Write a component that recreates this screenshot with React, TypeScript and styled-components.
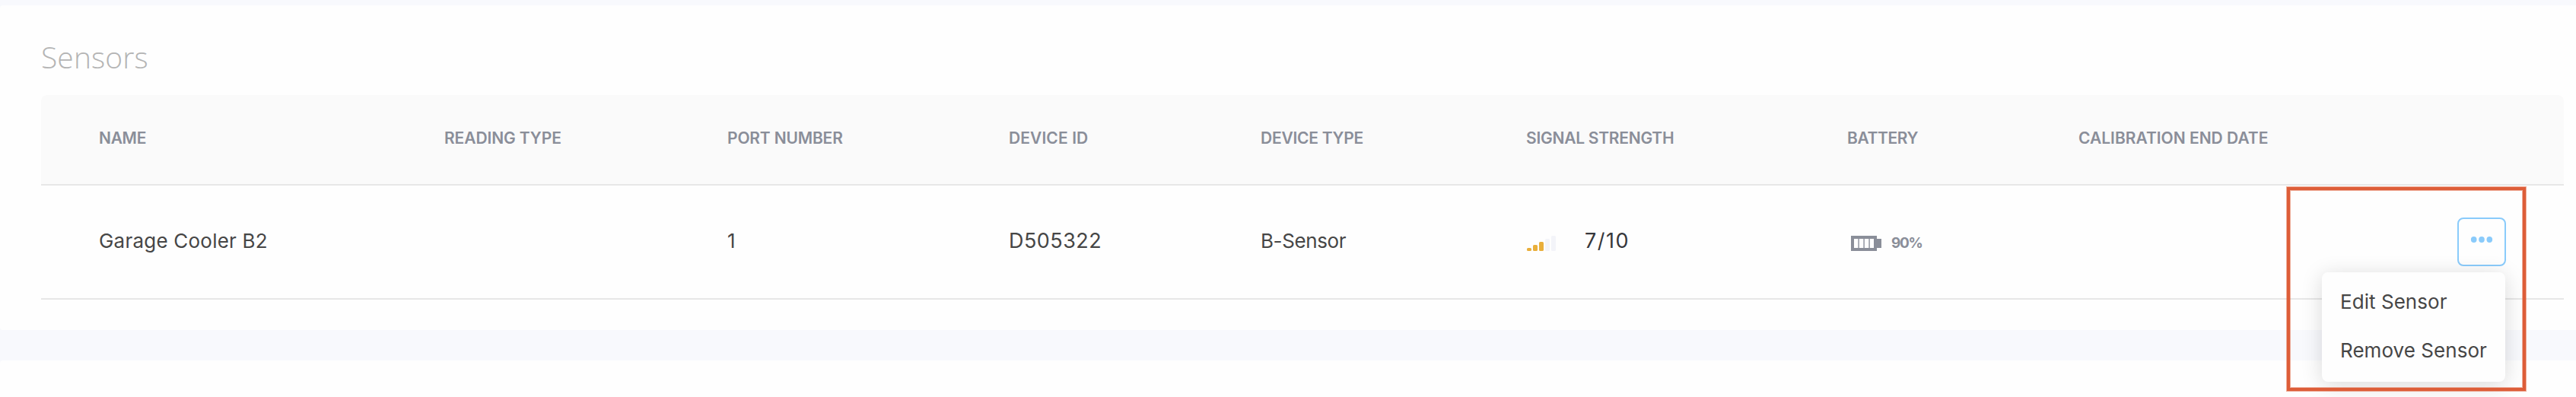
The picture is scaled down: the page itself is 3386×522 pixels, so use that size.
import React from 'react';
import styled, { createGlobalStyle } from 'styled-components';

const GlobalStyle = createGlobalStyle`
  *, *::before, *::after { box-sizing: border-box; }
  body {
    margin: 0;
    background: #f8f9fd;
    font-family: Inter, 'Liberation Sans', sans-serif;
    color: #464646;
  }
`;

const Page = styled.div`
  height: 522px;
  padding-top: 7px;
  display: flex;
  flex-direction: column;
  gap: 40px;
  overflow: hidden;
`;

const Card = styled.section`
  flex: 0 0 427px;
  padding: 44px 16px 0 54px;
  background: #fefefe;
  border-radius: 4px 0 0 4px;
`;

const NextCard = styled.section`
  flex: 1;
  background: #fefefe;
  border-radius: 4px 0 0 0;
`;

const Title = styled.h2`
  margin: 0;
  height: 74px;
  font-family: 'Open Sans', Lato, sans-serif;
  font-size: 39px;
  line-height: 48px;
  font-weight: 300;
  letter-spacing: 0.1px;
  color: #b4b4b4;
`;

const Row = styled.div`
  display: grid;
  grid-template-columns: 454px 372px 370px 331px 349px 422px 304px 1fr 140px;
  align-items: center;
  padding-left: 76px;
  border-bottom: 2px solid #e7e7e7;
`;

const HeaderRow = styled(Row)`
  height: 119px;
  padding-bottom: 3px;
  background: #fafafa;
  border-radius: 8px 8px 0 0;
`;

const SensorRow = styled(Row)`
  height: 150px;
`;

const HeaderCell = styled.div<{ $tracking: number }>`
  font-size: 21px;
  line-height: 26px;
  font-weight: 600;
  letter-spacing: ${(p) => p.$tracking}px;
  color: #8a8e99;
  white-space: nowrap;
`;

const Cell = styled.div<{ $tracking?: number; $size?: number }>`
  display: flex;
  align-items: center;
  height: 34px;
  padding-bottom: 2px;
  font-size: ${(p) => p.$size ?? 26}px;
  line-height: 32px;
  letter-spacing: ${(p) => p.$tracking ?? 0}px;
  white-space: nowrap;
`;

const SignalIcon = styled.svg`
  width: 38px;
  height: 20px;
  margin: 6px 38px 0 1px;
`;

const SignalValue = styled.span`
  color: #36373b;
`;

const BatteryIcon = styled.svg`
  width: 40px;
  height: 20px;
  margin: 6px 13px 0 5px;
`;

const BatteryValue = styled.span`
  margin-top: 6px;
  font-size: 19px;
  line-height: 24px;
  font-weight: 700;
  letter-spacing: -1.3px;
  color: #8a8e99;
`;

const Actions = styled.div`
  position: relative;
  width: 64px;
  height: 64px;
`;

const MoreButton = styled.button`
  display: flex;
  align-items: center;
  justify-content: center;
  width: 64px;
  height: 64px;
  padding: 0 0 6px;
  background: #fefefe;
  border: 2px solid #8acbfb;
  border-radius: 8px;
`;

const Menu = styled.div`
  position: absolute;
  z-index: 1;
  top: 72px;
  right: 1px;
  width: 241px;
  height: 144px;
  padding: 7px 0 0 24px;
  background: #fefefe;
  border-radius: 8px;
  box-shadow: 0 4px 28px rgba(0, 0, 0, 0.15);
`;

const MenuItem = styled.div`
  height: 64px;
  font-size: 26px;
  line-height: 64px;
  letter-spacing: 0.05px;
  white-space: nowrap;
`;

const Highlight = styled.div`
  position: absolute;
  z-index: 2;
  top: -40px;
  left: -224px;
  width: 314px;
  height: 268px;
  border: 4px solid #dd5d38;
  box-shadow: 0 0 0 1px rgba(221, 93, 56, 0.5), inset 0 0 0 1px rgba(221, 93, 56, 0.5);
  pointer-events: none;
`;

const columns = [
  { label: 'NAME', tracking: -0.3 },
  { label: 'READING TYPE', tracking: -0.1 },
  { label: 'PORT NUMBER', tracking: -0.17 },
  { label: 'DEVICE ID', tracking: 0.1 },
  { label: 'DEVICE TYPE', tracking: -0.25 },
  { label: 'SIGNAL STRENGTH', tracking: -0.25 },
  { label: 'BATTERY', tracking: -0.4 },
  { label: 'CALIBRATION END DATE', tracking: 0 },
];

const signalBars = [4, 8, 12, 16, 20];

function Signal({ level }: { level: number }) {
  return (
    <SignalIcon viewBox="0 0 38 20">
      {signalBars.map((h, i) => (
        <rect key={h} x={i * 8} y={20 - h} width="6" height={h} rx="1.6" fill={i < level ? '#e9af3b' : '#f3f4f9'} />
      ))}
    </SignalIcon>
  );
}

function Battery() {
  return (
    <BatteryIcon viewBox="0 0 40 20">
      <path d="M0 0h34v4h6v12h-6v4H0z" fill="#8a8e99" />
      <path d="M4 4h26v12H4z" fill="#fefefe" />
      <path d="M9.3 4h1.6v12H9.3zM16.3 4h1.6v12h-1.6zM23.3 4h1.6v12h-1.6z" fill="#9a9da7" />
    </BatteryIcon>
  );
}

export default function App() {
  return (
    <>
      <GlobalStyle />
      <Page>
        <Card>
          <Title>Sensors</Title>
          <HeaderRow>
            {columns.map((c) => (
              <HeaderCell key={c.label} $tracking={c.tracking}>{c.label}</HeaderCell>
            ))}
          </HeaderRow>
          <SensorRow>
            <Cell $tracking={0.22}>Garage Cooler B2</Cell>
            <Cell />
            <Cell>1</Cell>
            <Cell $size={27} $tracking={0.45}>D505322</Cell>
            <Cell $tracking={-0.4}>B-Sensor</Cell>
            <Cell $size={27} $tracking={1.5}>
              <Signal level={3} />
              <SignalValue>7/10</SignalValue>
            </Cell>
            <Cell>
              <Battery />
              <BatteryValue>90%</BatteryValue>
            </Cell>
            <Cell />
            <Actions>
              <MoreButton aria-label="Sensor actions">
                <svg width="30" height="10" viewBox="0 0 30 10" fill="#8acbfb">
                  <ellipse cx="4.7" cy="5" rx="3.8" ry="4.1" />
                  <ellipse cx="15" cy="5" rx="3.8" ry="4.1" />
                  <ellipse cx="25.3" cy="5" rx="3.8" ry="4.1" />
                </svg>
              </MoreButton>
              <Menu>
                <MenuItem>Edit Sensor</MenuItem>
                <MenuItem>Remove Sensor</MenuItem>
              </Menu>
              <Highlight />
            </Actions>
          </SensorRow>
        </Card>
        <NextCard />
      </Page>
    </>
  );
}
